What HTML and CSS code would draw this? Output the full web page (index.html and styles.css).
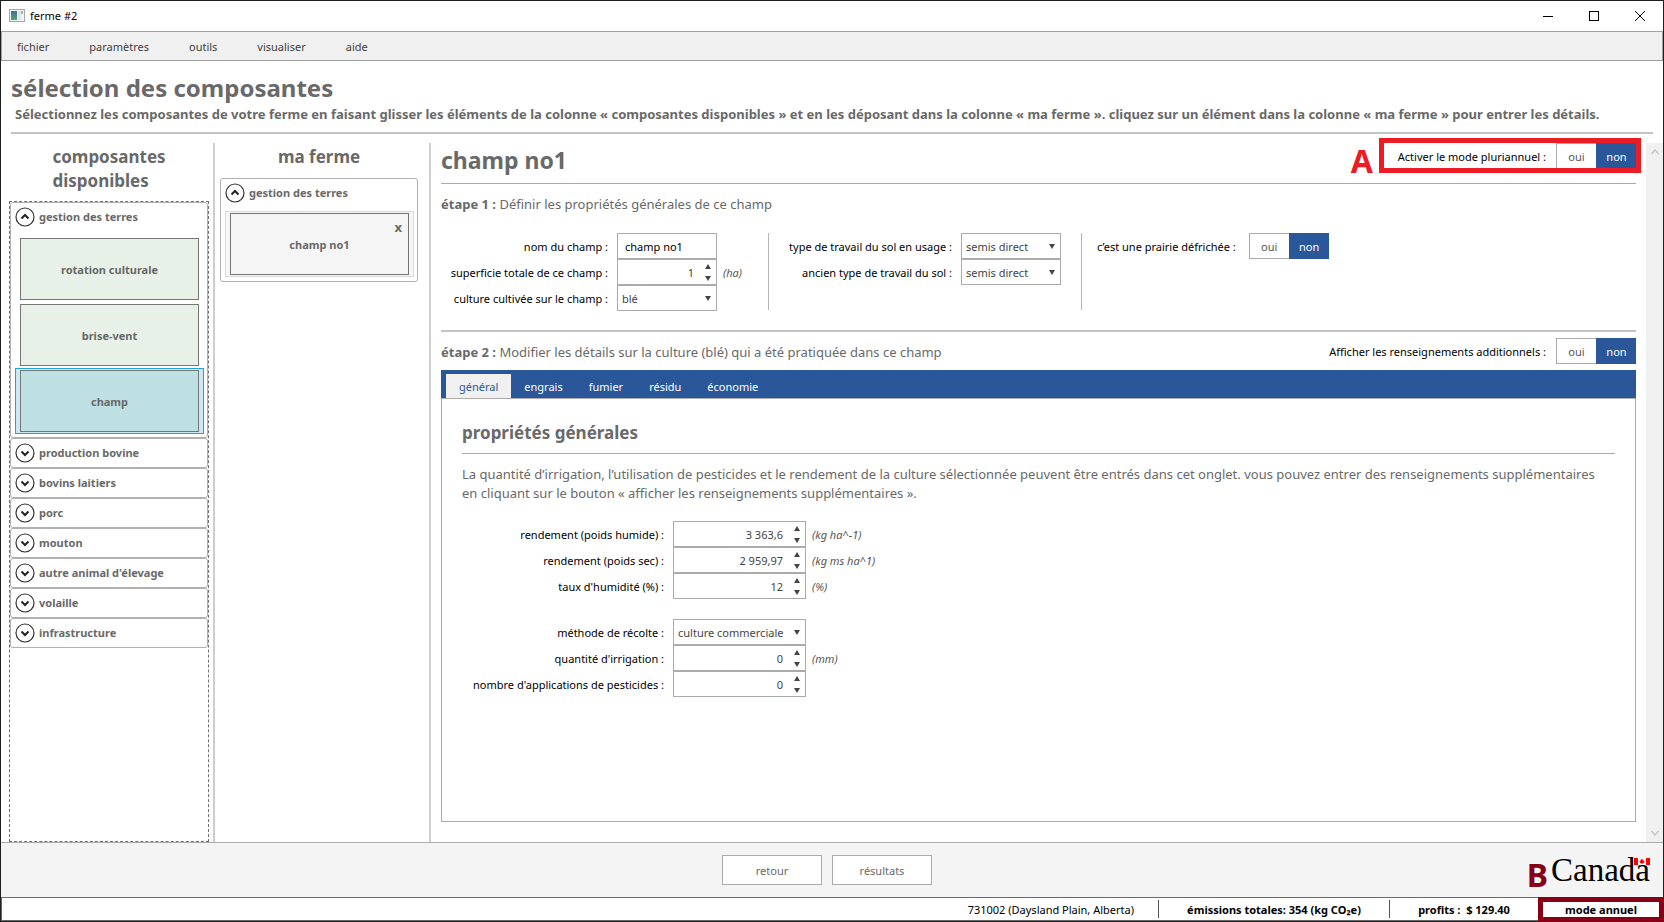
FILE: index.html
```html
<!DOCTYPE html>
<html lang="fr">
<head>
<meta charset="utf-8">
<title>ferme #2</title>
<link rel="stylesheet" href="styles.css">
</head>
<body>
<svg class="defs" width="0" height="0" aria-hidden="true">
  <symbol id="open" viewBox="0 0 20 20"><circle cx="10" cy="10" r="9" fill="#fff" stroke="#333" stroke-width="1.2"/><path d="M6.500 11.500 10 8l3.500 3.500" fill="none" stroke="#222" stroke-width="2"/></symbol>
  <symbol id="closed" viewBox="0 0 20 20"><circle cx="10" cy="10" r="9" fill="#fff" stroke="#333" stroke-width="1.2"/><path d="M6.500 8.500 10 12l3.500-3.500" fill="none" stroke="#222" stroke-width="2"/></symbol>
</svg>
<div class="window">
  <header class="titlebar">
    <svg class="app-icon" width="16" height="14" viewBox="0 0 16 14"><rect x=".5" y=".5" width="15" height="12" fill="#f4f4f4" stroke="#a5a9ad"/><defs><linearGradient id="g" x2="0" y2="1"><stop stop-color="#3f6f9c"/><stop offset="1" stop-color="#53a474"/></linearGradient></defs><rect x="2" y="2" width="6" height="9" fill="url(#g)"/><rect x="9" y="2" width="3" height="9" fill="#e2e4e6"/><rect x="12" y="2" width="2" height="3" fill="#8fc0a4"/></svg>
    <span class="title">ferme #2</span>
    <button class="win-btn" aria-label="Réduire"><svg width="10" height="10"><path d="M0 5.500h10" stroke="#000"/></svg></button>
    <button class="win-btn" aria-label="Agrandir"><svg width="10" height="10"><rect x=".5" y=".5" width="9" height="9" fill="none" stroke="#000"/></svg></button>
    <button class="win-btn" aria-label="Fermer"><svg width="10" height="10"><path d="M0 0l10 10M10 0L0 10" stroke="#000"/></svg></button>
  </header>
  <nav class="menubar">
    <button>fichier</button><button>paramètres</button><button>outils</button><button>visualiser</button><button>aide</button>
  </nav>
  <div class="intro">
    <h1>sélection des composantes</h1>
    <p>Sélectionnez les composantes de votre ferme en faisant glisser les éléments de la colonne « composantes disponibles » et en les déposant dans la colonne « ma ferme ». cliquez sur un élément dans la colonne « ma ferme » pour entrer les détails.</p>
  </div>
  <div class="columns">
    <section class="available">
      <h2>composantes<br>disponibles</h2>
      <div class="drop">
        <div class="expander">
          <button class="exp-head"><svg><use href="#open"/></svg>gestion des terres</button>
          <div class="item"><div class="card green">rotation culturale</div></div>
          <div class="item"><div class="card green">brise-vent</div></div>
          <div class="item selected"><div class="card teal">champ</div></div>
        </div>
        <div class="expander"><button class="exp-head"><svg><use href="#closed"/></svg>production bovine</button></div>
        <div class="expander"><button class="exp-head"><svg><use href="#closed"/></svg>bovins laitiers</button></div>
        <div class="expander"><button class="exp-head"><svg><use href="#closed"/></svg>porc</button></div>
        <div class="expander"><button class="exp-head"><svg><use href="#closed"/></svg>mouton</button></div>
        <div class="expander"><button class="exp-head"><svg><use href="#closed"/></svg>autre animal d'élevage</button></div>
        <div class="expander"><button class="exp-head"><svg><use href="#closed"/></svg>volaille</button></div>
        <div class="expander"><button class="exp-head"><svg><use href="#closed"/></svg>infrastructure</button></div>
      </div>
    </section>
    <section class="farm">
      <h2>ma ferme</h2>
      <div class="expander">
        <button class="exp-head"><svg><use href="#open"/></svg>gestion des terres</button>
        <div class="item picked"><div class="card grey">champ no1<button class="remove" aria-label="Supprimer champ no1">x</button></div></div>
      </div>
    </section>
    <main class="detail">
      <div class="detail-head">
        <h2>champ no1</h2>
        <div class="callout">
          <span class="mark mark-a">A</span>
          <span class="lbl" id="l-multi">Activer le mode pluriannuel :</span>
          <div class="toggle" role="group" aria-labelledby="l-multi"><button>oui</button><button class="on">non</button></div>
        </div>
      </div>
      <p class="step"><b>étape 1 :</b> Définir les propriétés générales de ce champ</p>
      <div class="props">
        <div class="grid field-grid">
          <label for="nom">nom du champ :</label><input id="nom" class="box text" value="champ no1"><span></span>
          <label for="sup">superficie totale de ce champ :</label><div class="box spin"><input id="sup" value="1"><button class="up" aria-label="Augmenter"></button><button class="down" aria-label="Diminuer"></button></div><i>(ha)</i>
          <label for="cul">culture cultivée sur le champ :</label><div class="box pick"><select id="cul"><option>blé</option></select></div><span></span>
        </div>
        <div class="grid till-grid">
          <label for="t1">type de travail du sol en usage :</label><div class="box pick"><select id="t1"><option>semis direct</option></select></div>
          <label for="t2">ancien type de travail du sol :</label><div class="box pick"><select id="t2"><option>semis direct</option></select></div>
        </div>
        <div class="prairie">
          <span class="lbl" id="l-pr">c’est une prairie défrichée :</span>
          <div class="toggle" role="group" aria-labelledby="l-pr"><button>oui</button><button class="on">non</button></div>
        </div>
      </div>
      <div class="step2">
        <p class="step"><b>étape 2 :</b> Modifier les détails sur la culture (blé) qui a été pratiquée dans ce champ</p>
        <span class="lbl" id="l-add">Afficher les renseignements additionnels :</span>
        <div class="toggle" role="group" aria-labelledby="l-add"><button>oui</button><button class="on">non</button></div>
      </div>
      <div class="tabs" role="tablist">
        <button role="tab" class="active">général</button><button role="tab">engrais</button><button role="tab">fumier</button><button role="tab">résidu</button><button role="tab">économie</button>
      </div>
      <div class="panel">
        <h3>propriétés générales</h3>
        <p class="help">La quantité d’irrigation, l’utilisation de pesticides et le rendement de la culture sélectionnée peuvent être entrés dans cet onglet. vous pouvez entrer des renseignements supplémentaires en cliquant sur le bouton « afficher les renseignements supplémentaires ».</p>
        <div class="grid crop-grid">
          <label for="r1">rendement (poids humide) :</label><div class="box spin"><input id="r1" value="3 363,6"><button class="up" aria-label="Augmenter"></button><button class="down" aria-label="Diminuer"></button></div><i>(kg ha^-1)</i>
          <label for="r2">rendement (poids sec) :</label><div class="box spin"><input id="r2" value="2 959,97"><button class="up" aria-label="Augmenter"></button><button class="down" aria-label="Diminuer"></button></div><i>(kg ms ha^1)</i>
          <label for="r3">taux d'humidité (%) :</label><div class="box spin"><input id="r3" value="12"><button class="up" aria-label="Augmenter"></button><button class="down" aria-label="Diminuer"></button></div><i>(%)</i>
        </div>
        <div class="grid crop-grid">
          <label for="m1">méthode de récolte :</label><div class="box pick"><select id="m1"><option>culture commerciale</option></select></div><span></span>
          <label for="m2">quantité d'irrigation :</label><div class="box spin"><input id="m2" value="0"><button class="up" aria-label="Augmenter"></button><button class="down" aria-label="Diminuer"></button></div><i>(mm)</i>
          <label for="m3">nombre d'applications de pesticides :</label><div class="box spin"><input id="m3" value="0"><button class="up" aria-label="Augmenter"></button><button class="down" aria-label="Diminuer"></button></div><span></span>
        </div>
      </div>
    </main>
    <div class="scroll" aria-hidden="true">
      <svg width="8" height="6"><path d="M.5 5 4 1l3.500 4" fill="none" stroke="#c6c6c6" stroke-width="1.500"/></svg>
      <svg width="8" height="6"><path d="M.5 1 4 5l3.500-4" fill="none" stroke="#c6c6c6" stroke-width="1.500"/></svg>
    </div>
  </div>
  <footer class="actions">
    <span></span>
    <div class="nav-btns"><button>retour</button><button>résultats</button></div>
    <div class="brand"><span class="mark mark-b">B</span><span class="wordmark">Canada<svg class="flag" width="16" height="7" viewBox="0 0 16 7"><rect width="16" height="7" fill="#fff"/><path d="M0 0h4v7H0zM12 0h4v7h-4z" fill="#f00"/><path d="M8 .5l.8 1.300.7-.3-.2 1.500 1.200-.5-.3 1.200.5.3-1.800 1.400H8.200V6.500h-.4V5.400H7.100L5.300 4l.5-.3-.3-1.200 1.200.5-.2-1.500.7.3z" fill="#f00"/></svg></span></div>
  </footer>
  <div class="status">
    <span class="place">731002 (Daysland Plain, Alberta)</span>
    <b class="emis">émissions totales: 354 (kg CO₂e)</b>
    <b class="profit">profits :&nbsp; $ 129.40</b>
    <b class="mode">mode annuel</b>
  </div>
</div>
</body>
</html>
```
FILE: styles.css
```css
* { box-sizing: border-box; }
body { margin: 0; font: 11px/16px "Noto Sans", "Open Sans", sans-serif; color: #000; background: #fff; }
h1, h2, h3, p { margin: 0; }
button, input, select { font: inherit; color: inherit; border: 0; background: none; padding: 0; margin: 0; border-radius: 0; outline: 0; }
.defs { position: absolute; }
.window { min-height: 100vh; display: flex; flex-direction: column; border: 1px solid #1f1f1f; }

.titlebar { display: flex; align-items: center; height: 30px; padding-left: 8px; }
.title { flex: 1; margin-left: 5px; }
.win-btn { width: 46px; height: 28px; display: grid; place-items: center; }
.menubar { display: flex; gap: 40px; height: 30px; padding: 2px 15px 0; background: #f0f0f0; border: 1px solid #a0a0a0; color: #404040; }

.intro { margin: 0 10px; padding: 9px 0 9px; border-bottom: 2px solid #c4c4c4; color: #696969; }
.intro h1 { font-size: 24px; line-height: 36px; }
.intro p { padding-left: 4px; font-size: 13px; line-height: 17px; font-weight: 700; white-space: nowrap; }

.columns { flex: 1; display: flex; padding: 9px 0 0 8px; }
.available, .farm { display: flex; flex-direction: column; border-right: 2px solid #cecece; color: #696969; }
.available { width: 206px; padding-right: 4px; }
.farm { width: 216px; padding: 0 11px 0 5px; }
.columns h2 { font-size: 17px; line-height: 24px; }
.available h2 { align-self: center; padding: 2px 0 8px; }
.farm h2 { text-align: center; padding: 2px 0 9px; }
.drop { flex: 1; border: 1px dashed #707070; }
.expander { border: 1px solid #b0b0b0; border-radius: 3px; }
.exp-head { display: flex; align-items: center; gap: 4px; width: 100%; height: 28px; padding-left: 4px; font-weight: 700; }
.exp-head svg { width: 20px; height: 20px; }
.available .item { margin: 0 3px 0 4px; padding: 1px 4px; border: 1px solid transparent; }
.available .exp-head + .item { margin-top: 5px; }
.available .expander:first-child { padding-bottom: 3px; }
.available .item.selected { border-color: #26a0da; background: #cbe8f6; }
.card { position: relative; display: grid; place-items: center; height: 62px; padding-top: 1px; border: 1px solid #767676; font-weight: 700; }
.green { background: #e7f1e7; }
.teal { background: #bee0e2; }
.grey { background: #f5f5f5; }
.item.picked { margin: 4px 3px 4px 4px; padding: 1px 4px; border: 1px solid #dadada; background: #f6f6f6; }
.remove { position: absolute; top: 5px; right: 6px; font-size: 13px; font-weight: 700; }

.detail { flex: 1; display: flex; flex-direction: column; padding: 0 10px 20px; }
.detail-head { display: flex; justify-content: space-between; height: 41px; border-bottom: 1px solid #ababab; }
.detail .detail-head h2 { font-size: 23px; line-height: 34px; color: #696969; }
.callout { position: relative; display: flex; align-items: center; gap: 10px; align-self: flex-start; }
.callout::after { content: ""; position: absolute; inset: -5px -5px -4px -19px; border: 5px solid #ed1c24; pointer-events: none; }
.mark { font-size: 32px; line-height: 32px; font-weight: 700; }
.mark-a { position: absolute; left: -47px; top: 2px; color: #ed1c24; }
.mark-b { margin-top: 10px; color: #880015; }
.lbl { padding-top: 2px; }
.toggle { display: flex; height: 26px; }
.toggle button { width: 40px; padding-top: 2px; border: 1px solid #ababab; border-right: 0; color: #555; background: #fff; }
.toggle .on { color: #fff; background: #2a579a; border-color: #2a579a; }
.step { padding: 10px 0; font-size: 13px; line-height: 20px; color: #696969; }
.props { display: flex; height: 99px; margin-top: 9px; padding-bottom: 20px; border-bottom: 2px solid #c4c4c4; }
.grid { display: grid; grid-auto-rows: 26px; align-items: center; }
.grid label { justify-self: end; padding: 2px 9px 0 0; white-space: nowrap; }
.grid i { padding: 2px 0 0 6px; color: #555; white-space: nowrap; }
.field-grid { grid-template-columns: 176px 100px 51px; }
.till-grid { grid-template-columns: 192px 100px; padding-right: 20px; border-left: 1px solid #b4b4b4; border-right: 1px solid #b4b4b4; }
.box { width: 100%; height: 26px; border: 1px solid #ababab; background: #fff; color: #444; }
.text { padding: 1px 0 0 7px; color: #000; }
.spin { display: grid; grid-template: 1fr 1fr / 1fr 16px; }
.spin input { grid-row: 1 / 3; width: 100%; min-width: 0; text-align: right; padding: 1px 6px 0 0; }
.spin button { display: grid; place-items: center; }
.up::before { content: ""; border: 3px solid transparent; border-top: 0; border-bottom: 5px solid #444; }
.down::before { content: ""; border: 3px solid transparent; border-bottom: 0; border-top: 5px solid #444; }
.pick { display: grid; align-items: center; }
.pick select { grid-area: 1 / 1; width: 100%; height: 24px; appearance: none; padding: 1px 0 0 4px; }
.pick::after { content: ""; grid-area: 1 / 1; justify-self: end; margin-right: 5px; border: 3px solid transparent; border-bottom: 0; border-top: 5px solid #444; pointer-events: none; }
.prairie { display: flex; align-items: center; gap: 13px; height: 26px; padding-left: 15px; }
.step2 { display: flex; align-items: center; gap: 10px; height: 38px; }
.step2 .step { flex: 1; padding: 2px 0 0; }

.tabs { display: flex; height: 28px; padding: 4px 5px 0; background: #2a579a; color: #fff; }
.tabs button { padding: 2px 13px 0; }
.tabs .active { background: #f0f0f0; color: #2a579a; }
.panel { flex: 1; border: 1px solid #ababab; padding: 20px; }
.panel h3 { font-size: 17px; line-height: 28px; height: 35px; color: #696969; border-bottom: 1px solid #ababab; }
.help { padding: 11px 10px 18px 0; font-size: 13px; line-height: 19px; color: #696969; }
.crop-grid { grid-template-columns: 211px 133px auto; justify-content: start; margin-bottom: 20px; }

.scroll { width: 17px; display: flex; flex-direction: column; justify-content: space-between; align-items: center; padding: 6px 0; background: #f0f0f0; }
.actions { display: grid; grid-template-columns: 1fr auto 1fr; align-items: center; height: 55px; padding-right: 10px; border-top: 1px solid #ababab; background: #f4f4f4; }
.nav-btns { display: flex; gap: 10px; }
.nav-btns button { width: 100px; height: 30px; padding-top: 2px; border: 1px solid #ababab; background: #fff; color: #696969; }
.brand { display: flex; justify-content: flex-end; align-items: center; gap: 3px; padding-right: 3px; }
.wordmark { position: relative; font: 33px/34px "Liberation Serif", serif; }
.flag { position: absolute; right: 0; top: 5px; }
.status { display: flex; align-items: center; justify-content: flex-end; height: 24px; border: 1px solid #696969; }
.status > * { display: grid; place-items: center; height: 18px; padding-top: 1px; }
.status .place { padding: 1px 24px 0; }
.emis { width: 232px; border-left: 1px solid #555; border-right: 1px solid #555; }
.profit { width: 148px; }
.status .mode { width: 126px; height: 25px; margin-right: -2px; padding: 0; border: 5px solid #880015; }
```
